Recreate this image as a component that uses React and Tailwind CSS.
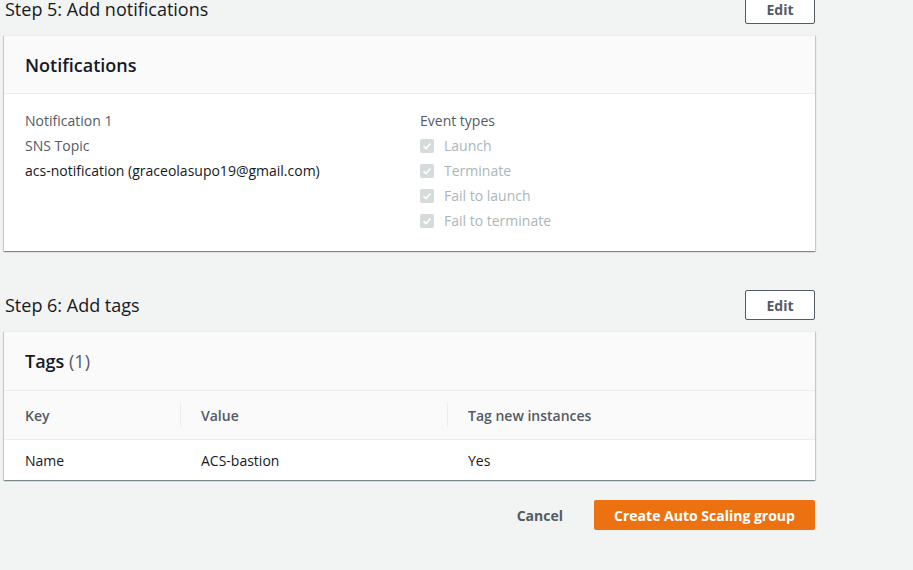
import React from "react";

const font = { fontFamily: "'Open Sans', Lato, sans-serif" };

function Check() {
  return (
    <span className="w-[14px] h-[14px] rounded-[2px] bg-[#d5dbdb] flex items-center justify-center shrink-0">
      <svg width="10" height="10" viewBox="0 0 10 10">
        <path d="M1.5 5.2 L4 7.5 L8.5 2.5" fill="none" stroke="#ffffff" strokeWidth="1.6" />
      </svg>
    </span>
  );
}

function EditButton() {
  return (
    <button className="w-[70px] h-[30px] border border-[#545b64] rounded-[2px] bg-white text-[#545b64] text-[14px] font-bold flex items-center justify-center">
      Edit
    </button>
  );
}

function Card({ children }) {
  return (
    <div className="bg-white border-t border-[#eaeded] shadow-[0_1px_1px_0_rgba(0,28,36,0.3),1px_1px_1px_0_rgba(0,28,36,0.15),-1px_1px_1px_0_rgba(0,28,36,0.15)]">
      {children}
    </div>
  );
}

export default function App() {
  const events = ["Launch", "Terminate", "Fail to launch", "Fail to terminate"];
  return (
    <div className="w-[913px] h-[570px] bg-[#f2f3f3] overflow-hidden text-[#16191f]" style={font}>
      <div className="w-[811px] ml-[4px] -mt-[6px]">
        {/* Step 5 */}
        <div className="flex items-center justify-between h-[30px]">
          <h2 className="text-[18px] pl-[1px] text-[#16191f]">Step 5: Add notifications</h2>
          <EditButton />
        </div>
        <div className="mt-[11px]">
          <Card>
            <div className="h-[58px] bg-[#fafafa] border-b border-[#eaeded] flex items-center px-[21px]">
              <h3 className="text-[18px] font-semibold pt-[1px]">Notifications</h3>
            </div>
            <div className="grid grid-cols-[395px_1fr] px-[21px] pt-[14px] pb-[18px] text-[14px] leading-[25px]">
              <div>
                <div className="text-[#545b64]">Notification 1</div>
                <div className="text-[#545b64]">SNS Topic</div>
                <div>acs-notification (graceolasupo19@gmail.com)</div>
              </div>
              <div>
                <div className="text-[#545b64]">Event types</div>
                {events.map((e) => (
                  <div key={e} className="flex items-center gap-[10px] text-[#aab7b8]">
                    <Check />
                    <span>{e}</span>
                  </div>
                ))}
              </div>
            </div>
          </Card>
        </div>

        {/* Step 6 */}
        <div className="flex items-center justify-between h-[30px] mt-[39px]">
          <h2 className="text-[18px] pl-[1px] text-[#16191f]">Step 6: Add tags</h2>
          <EditButton />
        </div>
        <div className="mt-[11px]">
          <Card>
            <div className="h-[59px] bg-[#fafafa] border-b border-[#eaeded] flex items-center px-[21px]">
              <h3 className="text-[18px]">
                <span className="font-semibold">Tags</span>{" "}
                <span className="text-[#545b64]">(1)</span>
              </h3>
            </div>
            <div className="grid grid-cols-[177px_267px_1fr] text-[14px]">
              <div className="h-[49px] bg-[#fafafa] border-b border-[#eaeded] flex items-center pl-[21px] font-semibold text-[#545b64]">
                <span className="flex-1">Key</span>
                <span className="w-px h-[24px] bg-[#eaeded]" />
              </div>
              <div className="h-[49px] bg-[#fafafa] border-b border-[#eaeded] flex items-center pl-[20px] font-semibold text-[#545b64]">
                <span className="flex-1">Value</span>
                <span className="w-px h-[24px] bg-[#eaeded]" />
              </div>
              <div className="h-[49px] bg-[#fafafa] border-b border-[#eaeded] flex items-center pl-[20px] font-semibold text-[#545b64]">
                Tag new instances
              </div>
              <div className="h-[40px] flex items-center pl-[21px]">Name</div>
              <div className="h-[40px] flex items-center pl-[20px]">ACS-bastion</div>
              <div className="h-[40px] flex items-center pl-[20px]">Yes</div>
            </div>
          </Card>
        </div>

        {/* Footer buttons */}
        <div className="flex justify-end items-center mt-[20px] gap-[11px]">
          <button className="h-[30px] px-[20px] text-[14px] font-bold text-[#545b64]">Cancel</button>
          <button className="h-[30px] w-[221px] rounded-[2px] bg-[#ec7211] text-white text-[14px] font-bold">
            Create Auto Scaling group
          </button>
        </div>
      </div>
    </div>
  );
}
